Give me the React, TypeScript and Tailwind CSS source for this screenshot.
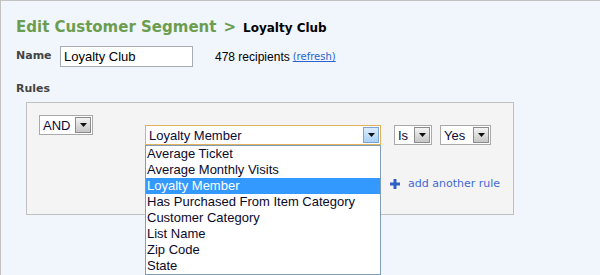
import React from 'react';

const verdana = "font-['DejaVu_Sans',sans-serif]";
const arial = "font-['Liberation_Sans',Arial,sans-serif]";

const options = [
  'Average Ticket',
  'Average Monthly Visits',
  'Loyalty Member',
  'Has Purchased From Item Category',
  'Customer Category',
  'List Name',
  'Zip Code',
  'State',
];

function Arrow({ focused = false }: { focused?: boolean }) {
  return (
    <div
      className={
        focused
          ? 'w-[16px] h-[16px] mr-[1px] border border-[#7aa6d6] bg-gradient-to-b from-[#dcecfc] to-[#a9d1f5] flex items-center justify-center'
          : 'w-[16px] h-[16px] mr-[1px] border border-[#8c8c8c] bg-gradient-to-b from-[#f4f4f4] to-[#c6c6c6] flex items-center justify-center'
      }
    >
      <svg width="7" height="4" viewBox="0 0 7 4">
        <path d="M0 0h7L3.5 4z" fill="#111" />
      </svg>
    </div>
  );
}

function Select({ label, width, focused = false }: { label: string; width: string; focused?: boolean }) {
  return (
    <div
      className={`${width} h-[20px] bg-white flex items-center justify-between ${
        focused ? 'border border-[#e2b15a]' : 'border border-[#a9a9a9]'
      }`}
    >
      <span className={`${arial} text-[13px] leading-none text-[#0a0a3a] pl-[3px]`}>{label}</span>
      <Arrow focused={focused} />
    </div>
  );
}

export default function App() {
  return (
    <div className="w-[600px] h-[275px] overflow-hidden bg-[#f1f6fd] border-l border-t border-[#c2c2c2] pl-[15px]">
      {/* Heading */}
      <div className={`${verdana} font-bold flex items-baseline gap-[7px] pt-[15px] h-[40px]`}>
        <span className="text-[15px] text-[#6c9d4f]">Edit Customer Segment</span>
        <span className="text-[15px] text-[#6c9d4f]">&gt;</span>
        <span className="text-[12px] text-black">Loyalty Club</span>
      </div>

      {/* Name row */}
      <div className="flex items-center h-[21px] mt-[5px]">
        <span className={`${verdana} text-[11px] font-bold text-[#444] w-[44px]`}>Name</span>
        <div className="w-[133px] h-[21px] border border-[#a5acb2] bg-white flex items-center pl-[3px]">
          <span className={`${arial} text-[13px] text-black`}>Loyalty Club</span>
        </div>
        <span className={`${arial} text-[12px] text-black ml-[22px]`}>478 recipients</span>
        <a className={`${verdana} text-[10px] text-[#2a62d6] underline ml-[3px]`} href="#">
          (refresh)
        </a>
      </div>

      <div className={`${verdana} text-[11px] font-bold text-[#444] mt-[14px] h-[21px]`}>Rules</div>

      {/* Rules panel */}
      <div className="ml-[10px] w-[488px] h-[113px] border border-[#c0c0c0] bg-[#f4f4f4] flex items-start pl-[12px] pt-[12px]">
        <Select label="AND" width="w-[54px]" />

        <div className="relative ml-[52px] mt-[10px]">
          <Select label="Loyalty Member" width="w-[236px]" focused />
          <ul className="absolute left-0 top-[20px] w-[236px] bg-white border border-[#7f9db9] z-10">
            {options.map((o) => (
              <li
                key={o}
                className={`${arial} text-[13px] h-[16px] leading-[16px] pl-[1px] whitespace-nowrap ${
                  o === 'Loyalty Member' ? 'bg-[#3399ff] text-white' : 'text-[#0a0a2a]'
                }`}
              >
                {o}
              </li>
            ))}
          </ul>
        </div>

        <div className="ml-[13px] mt-[10px] flex flex-col">
          <div className="flex gap-[8px]">
            <Select label="Is" width="w-[38px]" />
            <Select label="Yes" width="w-[51px]" />
          </div>
          <a href="#" className={`${verdana} text-[11px] text-[#3f6ad8] flex items-center gap-[8px] mt-[31px] -ml-[4px]`}>
            <svg width="10" height="10" viewBox="0 0 10 10">
              <path d="M3.5 0h3v3.5H10v3H6.5V10h-3V6.5H0v-3h3.5z" fill="#2f5fc4" />
            </svg>
            add another rule
          </a>
        </div>
      </div>
    </div>
  );
}
